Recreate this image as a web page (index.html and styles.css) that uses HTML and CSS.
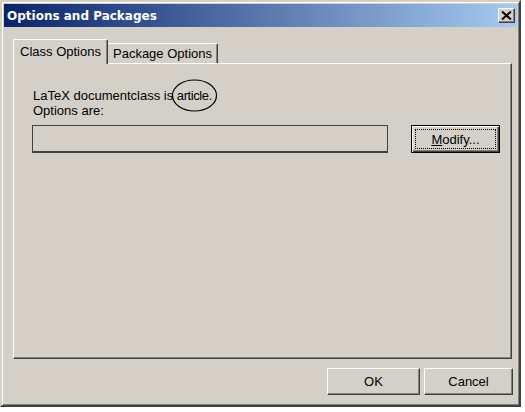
FILE: index.html
```html
<html>
<head>
<link rel="stylesheet" href="styles.css">
<title>Options and Packages</title>
</head>
<body>
<div class="window">
	<div class="titlebar">
		<span class="title">Options and Packages</span>
		<span class="close">
			<svg width="11" height="9" viewBox="0 0 11 9"><path d="M1 0.5 L10 8.5 M10 0.5 L1 8.5" stroke="#000" stroke-width="2" fill="none"/></svg>
		</span>
	</div>

	<div class="tabs">
		<div class="tab active">Class Options</div>
		<div class="tab">Package Options</div>
	</div>

	<div class="panel">
		<p class="info">LaTeX documentclass is <span class="circled">article.<svg class="oval" width="47" height="33" viewBox="0 0 47 33"><ellipse cx="23.5" cy="16.5" rx="22" ry="15.5" stroke="#000" stroke-width="1.2" fill="none"/></svg></span><br>Options are:</p>
		<div class="row">
			<div class="field"></div>
			<button class="btn modify"><span class="focus"><u>M</u>odify...</span></button>
		</div>
	</div>

	<div class="actions">
		<button class="btn ok">OK</button>
		<button class="btn cancel">Cancel</button>
	</div>
</div>
</body>
</html>
```

FILE: styles.css
```css
body {
	margin: 0;
	background-color: #FFF;
	font-family: "Liberation Sans", Arial, sans-serif;
	font-size: 13px;
	color: #000;
}

.window {
	width: 521px;
	height: 407px;
	box-sizing: border-box;
	background-color: #D4D0C8;
	border: 2px solid;
	border-color: #D4D0C8 #404040 #404040 #D4D0C8;
	box-shadow: inset 1px 1px #FFF, inset -1px -1px #808080;
	padding: 2px;
}

.titlebar {
	height: 23px;
	display: flex;
	align-items: center;
	justify-content: space-between;
	padding: 0 2px 0 3px;
	background: linear-gradient(to right, #0A246A, #A6CAF0);
}

.title {
	color: #FFF;
	font-family: "DejaVu Sans", Tahoma, sans-serif;
	font-weight: bold;
	font-size: 12px;
}

.close {
	width: 17px;
	height: 15px;
	box-sizing: border-box;
	display: flex;
	align-items: center;
	justify-content: center;
	background-color: #D4D0C8;
	border: 1px solid;
	border-color: #FFF #404040 #404040 #FFF;
	box-shadow: inset -1px -1px #808080;
}

.tabs {
	display: flex;
	align-items: flex-end;
	height: 24px;
	margin: 12px 0 0 9px;
}

.tab {
	height: 20px;
	box-sizing: border-box;
	padding-top: 2px;
	text-align: center;
	line-height: 15px;
	border-top: 1px solid #FFF;
	border-left: 1px solid #FFF;
	border-right: 1px solid #404040;
	border-top-left-radius: 2px;
	border-top-right-radius: 2px;
	box-shadow: inset -1px 0 #808080;
	width: 111px;
	margin-left: -1px;
}

.tab.active {
	position: relative;
	z-index: 1;
	height: 25px;
	width: 95px;
	margin: 0 0 -1px 0;
	padding-top: 4px;
	background-color: #D4D0C8;
}

.panel {
	width: 499px;
	height: 296px;
	box-sizing: border-box;
	margin-left: 9px;
	padding: 24px 0 0 19px;
	border: 1px solid;
	border-color: #FFF #404040 #404040 #FFF;
	box-shadow: inset -1px -1px #808080;
}

.info {
	margin: 0;
	line-height: 15px;
}

.circled {
	position: relative;
	letter-spacing: -0.4px;
}

.oval {
	position: absolute;
	left: -6px;
	top: -9px;
}

.row {
	display: flex;
	gap: 23px;
	margin: 7px 0 0 -1px;
}

.field {
	width: 356px;
	height: 28px;
	box-sizing: border-box;
	border: 1px solid #404040;
	border-bottom-width: 2px;
}

.btn {
	font-family: "Liberation Sans", Arial, sans-serif;
	font-size: 13px;
	color: #000;
	background-color: #D4D0C8;
	border: 1px solid;
	border-color: #FFF #404040 #404040 #FFF;
	box-shadow: inset -1px -1px #808080;
	border-radius: 0;
	padding: 0;
	box-sizing: border-box;
}

.modify {
	width: 89px;
	height: 28px;
	padding: 3px;
	border: 1px solid #000;
	box-shadow: inset 1px 1px #FFF, inset -1px -1px #404040, inset -2px -2px #808080;
}

.focus {
	display: flex;
	align-items: center;
	justify-content: center;
	height: 100%;
	box-sizing: border-box;
	border: 1px dotted #000;
}

.actions {
	display: flex;
	justify-content: flex-end;
	gap: 4px;
	margin-top: 9px;
	padding-right: 4px;
}

.ok {
	width: 93px;
	height: 27px;
}

.cancel {
	width: 89px;
	height: 27px;
}
```
